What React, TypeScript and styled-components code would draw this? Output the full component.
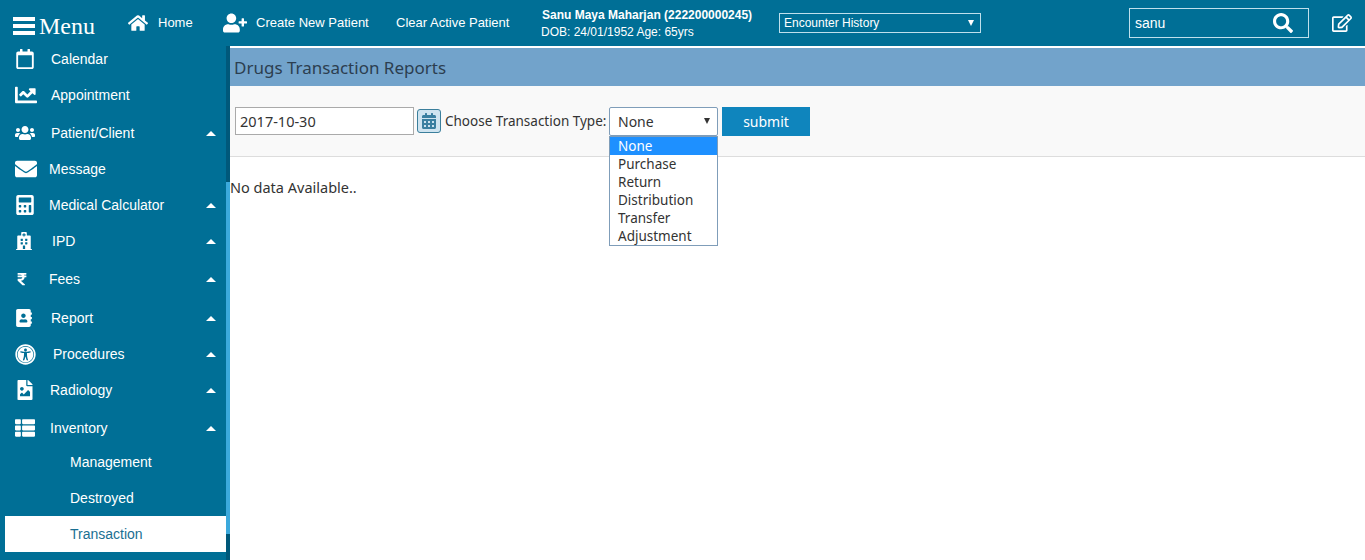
import React from "react";
import styled, { createGlobalStyle } from "styled-components";
import {
  FaAddressBook,
  FaCalculator,
  FaCalendarAlt,
  FaChartLine,
  FaEnvelope,
  FaHome,
  FaHospital,
  FaRegCalendar,
  FaRegEdit,
  FaRupeeSign,
  FaSearch,
  FaThList,
  FaUniversalAccess,
  FaUserPlus,
  FaUsers,
  FaFileImage,
} from "react-icons/fa";

const GlobalStyle = createGlobalStyle`
  html, body {
    margin: 0;
    padding: 0;
    height: 100%;
    background: #fff;
    overflow: hidden;
  }
`;

const Page = styled.div`
  width: 1365px;
  height: 560px;
  overflow: hidden;
  font-family: "Liberation Sans", Arial, sans-serif;
  display: flex;
  flex-direction: column;
  background: #fff;
`;

const TopBar = styled.header`
  height: 46px;
  flex: none;
  background: #006f96;
  color: #fff;
  display: flex;
  align-items: center;
`;

const MenuButton = styled.div`
  width: 128px;
  padding-left: 13px;
  box-sizing: border-box;
  display: flex;
  align-items: center;
  gap: 4px;
  font-family: "Liberation Serif", serif;
  font-size: 24px;
  height: 100%;
  padding-top: 6px;
`;

const Burger = styled.span`
  width: 22px;
  height: 18px;
  display: block;
  background: linear-gradient(
    #fff 0 4px,
    transparent 4px 7px,
    #fff 7px 11px,
    transparent 11px 14px,
    #fff 14px 18px
  );
`;

const NavLink = styled.div<{ $width: number; $gap: number }>`
  width: ${(p) => p.$width}px;
  display: flex;
  align-items: center;
  gap: ${(p) => p.$gap}px;
  font-size: 13px;
  flex: none;
  padding-bottom: 1px;
  white-space: nowrap;
`;

const PatientInfo = styled.div`
  width: 240px;
  font-size: 12px;
  line-height: 17px;
  flex: none;
  padding-top: 2px;
`;

const PatientName = styled.div`
  font-weight: 700;
  padding-left: 1px;
`;

const EncounterSelect = styled.div`
  width: 190px;
  height: 18px;
  flex: none;
  border: 1px solid #bfe0ec;
  font-size: 12px;
  display: flex;
  align-items: center;
  justify-content: space-between;
  padding: 0 6px 0 4px;
  box-sizing: content-box;
  margin-left: -2px;
`;

const SmallArrow = styled.span<{ $dark?: boolean }>`
  width: 0;
  height: 0;
  border-left: 3.5px solid transparent;
  border-right: 3.5px solid transparent;
  border-top: 6px solid ${(p) => (p.$dark ? "#333" : "#fff")};
`;

const SearchBox = styled.div`
  width: 180px;
  height: 30px;
  margin-left: 148px;
  flex: none;
  border: 1px solid #bfe0ec;
  display: flex;
  align-items: center;
  justify-content: space-between;
  padding: 0 15px 0 5px;
  box-sizing: border-box;
  font-size: 14px;
`;

const EditLink = styled.div`
  margin-left: 23px;
  display: flex;
  align-items: center;
`;

const Body = styled.div`
  flex: 1;
  display: flex;
  min-height: 0;
`;

const Sidebar = styled.nav`
  width: 226px;
  flex: none;
  background: #006f96;
  padding: 0 0 0 5px;
  box-sizing: border-box;
  color: #fff;
  display: flex;
  flex-direction: column;
`;

const SideItem = styled.div<{ $height: number; $active?: boolean }>`
  height: ${(p) => p.$height}px;
  flex: none;
  display: flex;
  align-items: center;
  font-size: 14px;
  background: ${(p) => (p.$active ? "#fff" : "transparent")};
  color: ${(p) => (p.$active ? "#1a6f92" : "#fff")};
`;

const IconSlot = styled.span<{ $width: number }>`
  width: ${(p) => p.$width}px;
  padding-left: 10px;
  box-sizing: border-box;
  flex: none;
  display: flex;
  align-items: center;
`;

const SideLabel = styled.span`
  flex: 1;
  white-space: nowrap;
`;

const SubLabel = styled.span`
  padding-left: 65px;
`;

const UpArrow = styled.span`
  width: 0;
  height: 0;
  margin-right: 10px;
  border-left: 5px solid transparent;
  border-right: 5px solid transparent;
  border-bottom: 5px solid #fff;
`;

const Divider = styled.div`
  width: 4px;
  flex: none;
  display: flex;
  flex-direction: column;
`;

const DividerPart = styled.div<{ $height: number; $color: string }>`
  height: ${(p) => p.$height}px;
  background: ${(p) => p.$color};
`;

const Main = styled.main`
  flex: 1;
  min-width: 0;
  display: flex;
  flex-direction: column;
  font-family: "Noto Sans", "Open Sans", sans-serif;
  color: #333;
`;

const TitleBar = styled.div`
  height: 38px;
  margin-top: 2px;
  background: #72a3cb;
  display: flex;
  align-items: center;
  padding-left: 4px;
  font-size: 17px;
  color: #2c3e50;
  flex: none;
`;

const FilterBar = styled.div`
  height: 70px;
  flex: none;
  background: #f9f9f9;
  border-bottom: 1px solid #ddd;
  display: flex;
  align-items: center;
  padding-left: 5px;
  font-size: 14px;
  position: relative;
`;

const DateInput = styled.div`
  width: 179px;
  height: 28px;
  box-sizing: border-box;
  border: 1px solid #aaa;
  background: #fff;
  display: flex;
  align-items: center;
  padding-left: 4px;
  font-size: 14.5px;
`;

const PickerButton = styled.span`
  width: 24px;
  height: 24px;
  margin-left: 3px;
  box-sizing: border-box;
  border: 1px solid #3b7f9c;
  border-radius: 3px;
  background: #cfe4f0;
  color: #3a7fa0;
  display: flex;
  align-items: center;
  justify-content: center;
`;

const FilterLabel = styled.span`
  margin-left: 4px;
  font-size: 13.5px;
  width: 164px;
  flex: none;
  white-space: nowrap;
`;

const SelectWrap = styled.div`
  position: relative;
  width: 109px;
  flex: none;
`;

const SelectBox = styled.div`
  height: 29px;
  box-sizing: border-box;
  background: #fff;
  border: 1px solid #7f9db9;
  border-radius: 2px;
  display: flex;
  align-items: center;
  justify-content: space-between;
  padding: 0 7px 0 8px;
`;

const OptionList = styled.ul`
  position: absolute;
  top: 29px;
  left: 0;
  width: 109px;
  box-sizing: border-box;
  margin: 0;
  padding: 0;
  list-style: none;
  background: #fff;
  border: 1px solid #7f9db9;
  z-index: 2;
`;

const Option = styled.li<{ $selected?: boolean }>`
  height: 18px;
  line-height: 18px;
  padding-left: 8px;
  font-size: 13.5px;
  background: ${(p) => (p.$selected ? "#1e90ff" : "transparent")};
  color: ${(p) => (p.$selected ? "#fff" : "#333")};
`;

const SubmitButton = styled.button`
  width: 88px;
  height: 29px;
  margin-left: 4px;
  border: 0;
  background: #0f85bd;
  color: #fff;
  font-family: inherit;
  font-size: 14px;
  padding: 0;
`;

const EmptyNote = styled.p`
  margin: 20px 0 0;
  font-size: 14.5px;
  line-height: 20px;
  color: #333;
`;

const sideItems = [
  { label: "Calendar", icon: <FaRegCalendar size={20} />, slot: 46, height: 26 },
  { label: "Appointment", icon: <FaChartLine size={22} />, slot: 46, height: 46 },
  { label: "Patient/Client", icon: <FaUsers size={20} />, slot: 46, height: 30, arrow: true },
  { label: "Message", icon: <FaEnvelope size={22} />, slot: 44, height: 42 },
  { label: "Medical Calculator", icon: <FaCalculator size={20} />, slot: 44, height: 30, arrow: true },
  { label: "IPD", icon: <FaHospital size={18} />, slot: 47, height: 42, arrow: true },
  { label: "Fees", icon: <FaRupeeSign size={14} />, slot: 44, height: 34, arrow: true },
  { label: "Report", icon: <FaAddressBook size={18} />, slot: 46, height: 44, arrow: true },
  { label: "Procedures", icon: <FaUniversalAccess size={21} />, slot: 48, height: 28, arrow: true },
  { label: "Radiology", icon: <FaFileImage size={20} />, slot: 45, height: 44, arrow: true },
  { label: "Inventory", icon: <FaThList size={20} />, slot: 45, height: 32, arrow: true },
];

const options = ["None", "Purchase", "Return", "Distribution", "Transfer", "Adjustment"];

export default function App() {
  return (
    <Page>
      <GlobalStyle />
      <TopBar>
        <MenuButton>
          <Burger />
          Menu
        </MenuButton>
        <NavLink $width: any={0} $width={95} $gap={10}>
          <FaHome size={20} />
          Home
        </NavLink>
        <NavLink $width={173} $gap={9}>
          <FaUserPlus size={24} />
          Create New Patient
        </NavLink>
        <NavLink $width={145} $gap={0}>
          Clear Active Patient
        </NavLink>
        <PatientInfo>
          <PatientName>Sanu Maya Maharjan (222200000245)</PatientName>
          DOB: 24/01/1952 Age: 65yrs
        </PatientInfo>
        <EncounterSelect>
          Encounter History
          <SmallArrow />
        </EncounterSelect>
        <SearchBox>
          sanu
          <FaSearch size={20} />
        </SearchBox>
        <EditLink>
          <FaRegEdit size={20} />
        </EditLink>
      </TopBar>
      <Body>
        <Sidebar>
          {sideItems.map((item) => (
            <SideItem key={item.label} $height={item.height}>
              <IconSlot $width={item.slot}>{item.icon}</IconSlot>
              <SideLabel>{item.label}</SideLabel>
              {item.arrow && <UpArrow />}
            </SideItem>
          ))}
          <SideItem $height={36}>
            <SubLabel>Management</SubLabel>
          </SideItem>
          <SideItem $height={36}>
            <SubLabel>Destroyed</SubLabel>
          </SideItem>
          <SideItem $height={36} $active>
            <SubLabel>Transaction</SubLabel>
          </SideItem>
        </Sidebar>
        <Divider>
          <DividerPart $height={136} $color="#00587a" />
          <DividerPart $height={352} $color="#3ba9dc" />
          <DividerPart $height={26} $color="#00587a" />
        </Divider>
        <Main>
          <TitleBar>Drugs Transaction Reports</TitleBar>
          <FilterBar>
            <DateInput>2017-10-30</DateInput>
            <PickerButton>
              <FaCalendarAlt size={16} />
            </PickerButton>
            <FilterLabel>Choose Transaction Type:</FilterLabel>
            <SelectWrap>
              <SelectBox>
                None
                <SmallArrow $dark />
              </SelectBox>
              <OptionList>
                {options.map((o, i) => (
                  <Option key={o} $selected={i === 0}>
                    {o}
                  </Option>
                ))}
              </OptionList>
            </SelectWrap>
            <SubmitButton>submit</SubmitButton>
          </FilterBar>
          <EmptyNote>No data Available..</EmptyNote>
        </Main>
      </Body>
    </Page>
  );
}
